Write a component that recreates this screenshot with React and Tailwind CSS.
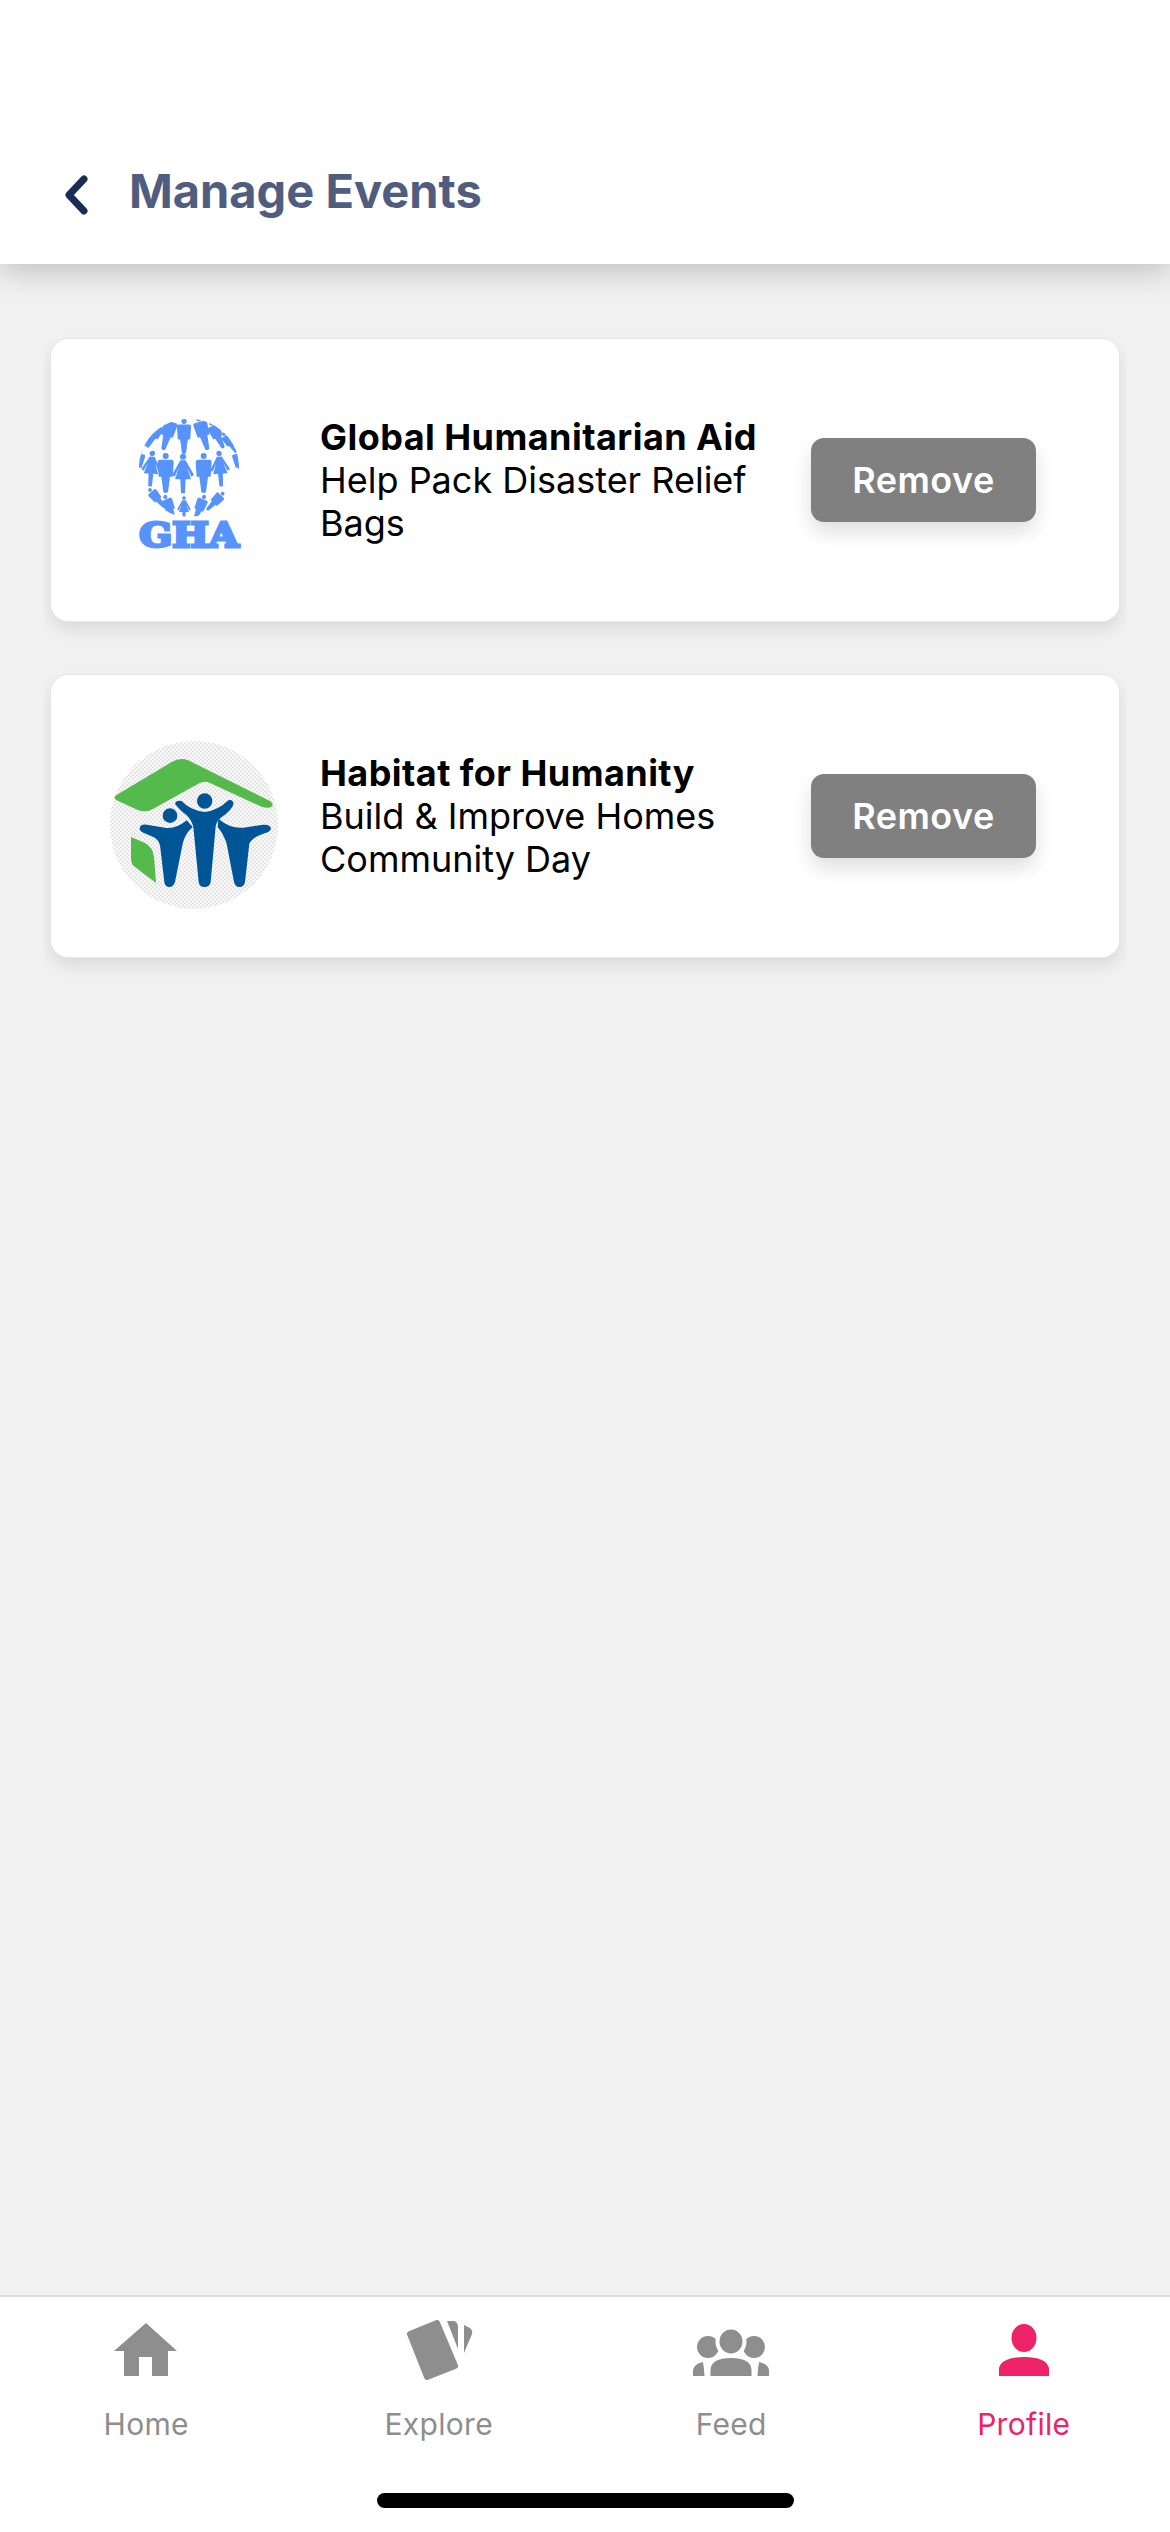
import React from "react";

const Man = ({ x, y, s = 1, r = 0 }) => (
  <g transform={`translate(${x} ${y}) rotate(${r}) scale(${s})`}>
    <circle cx="0" cy="0" r="9" />
    <path d="M-20 11Q-25 13-24 22L-21 62-13 62-7 108Q0 114 7 108L13 62 21 62 24 22Q25 13 20 11Z" />
  </g>
);

const Woman = ({ x, y, s = 1, r = 0 }) => (
  <g transform={`translate(${x} ${y}) rotate(${r}) scale(${s})`}>
    <circle cx="0" cy="0" r="9" />
    <path d="M-8 11L8 11 33 55 25 60 12 32 24 68 8 68 6 110-6 110-8 68-24 68-12 32-25 60-33 55Z" />
  </g>
);

// globe made of people, coordinates follow the 3x crop of the card
const GhaLogo = () => (
  <svg viewBox="210 231 504 504" className="w-[168px] h-[168px] shrink-0 mt-[17px]">
    <defs>
      <clipPath id="globe">
        <ellipse cx="447" cy="419" rx="150" ry="147" />
      </clipPath>
    </defs>
    <g fill="#5793FB" clipPath="url(#globe)">
      <Woman x={429} y={386} />
      <Man x={377} y={384} />
      <Man x={491} y={384} />
      <Woman x={337} y={376} s={0.9} r={4} />
      <Woman x={537} y={376} s={0.9} r={-4} />
      <Man x={300} y={368} s={0.8} r={14} />
      <Man x={592} y={368} s={0.8} r={-14} />
      <Man x={432} y={280} s={0.88} />
      <Man x={476} y={272} s={0.88} r={-16} />
      <Man x={396} y={272} s={0.88} r={16} />
      <Man x={514} y={286} s={0.75} r={-26} />
      <Man x={362} y={286} s={0.75} r={30} />
      <Man x={552} y={318} s={0.6} r={-34} />
      <Man x={326} y={318} s={0.6} r={36} />
      <Woman x={432} y={510} s={0.62} />
      <Man x={376} y={507} s={0.68} r={-22} />
      <Man x={492} y={507} s={0.68} r={22} />
      <Man x={548} y={497} s={0.62} r={44} />
      <Man x={330} y={486} s={0.62} r={-40} />
    </g>
    <text
      x="447"
      y="658"
      textAnchor="middle"
      textLength="298"
      lengthAdjust="spacingAndGlyphs"
      fill="#5793FB"
      stroke="#5793FB"
      strokeWidth="9"
      fontFamily="'DejaVu Serif', serif"
      fontWeight="700"
      fontSize="102"
    >
      GHA
    </text>
  </svg>
);

const HabitatLogo = () => (
  <svg viewBox="210 212 504 504" className="w-[168px] h-[168px] shrink-0 mt-[17px]">
    <defs>
      <pattern id="checks" width="12" height="12" patternUnits="userSpaceOnUse">
        <rect width="12" height="12" fill="#ffffff" />
        <rect width="6" height="6" fill="#e2e2e2" />
        <rect x="6" y="6" width="6" height="6" fill="#e2e2e2" />
      </pattern>
    </defs>
    <circle cx="462" cy="464" r="252" fill="url(#checks)" />
    <path
      fill="#53BA4B"
      d="M226 376L395 275Q420 260 445 270L690 392Q705 403 692 411Q675 416 655 405L510 338Q495 330 475 340L340 415Q320 427 295 420L235 392Q218 385 226 376Z"
    />
    <path fill="#53BA4B" d="M273 500L315 518Q338 530 342 560L348 638 285 590Q273 582 273 565Z" />
    <g fill="#005596">
      <circle cx="390" cy="436" r="22" />
      <circle cx="494" cy="392" r="23" />
      <path d="M300 470Q305 460 325 464L380 473Q410 475 440 450L458 470Q435 490 428 520L405 635Q400 650 388 650 375 650 373 635L360 525Q355 505 335 498L310 487Q295 480 300 470Z" />
      <path d="M405 400Q408 388 425 392 450 420 495 425 535 420 565 390 578 385 581 400 575 420 545 440 525 455 526 480L512 635Q510 650 493 650 478 650 476 635L460 470Q455 450 440 435 415 415 405 400Z" />
      <path d="M535 445Q570 475 610 472L670 463Q692 462 693 475 690 485 670 490 635 502 628 520L615 635Q612 650 598 650 586 650 582 635L560 520Q550 490 533 470Z" />
    </g>
  </svg>
);

const EventCard = ({ logo, title, lines }) => (
  <div className="overflow-hidden px-[6px] pt-[4px] pb-[30px]">
    <div className="flex items-center h-[284px] pl-[59px] pr-[64px] bg-white rounded-[18px] border border-[#e6e6e6] shadow-[0_8px_16px_rgba(0,0,0,0.09)]">
      {logo}
      <div className="flex-1 ml-[42px] text-[36px] leading-[43px] text-black">
        <div className="font-bold tracking-[0.45px]">{title}</div>
        {lines.map((line) => (
          <div key={line}>{line}</div>
        ))}
      </div>
      <div className="overflow-hidden mt-[17px] px-[19px] pt-[6px] pb-[23px]">
        <div className="flex items-center justify-center w-[225px] h-[84px] rounded-[13px] bg-[#808080] text-white text-[36px] font-semibold tracking-[0.5px] shadow-[0_10px_20px_rgba(0,0,0,0.13)]">
          Remove
        </div>
      </div>
    </div>
  </div>
);

const HomeIcon = () => <path d="M0 3L31 31H22V56H6V37H-7V56H-22V31H-32Z" />;

const ExploreIcon = () => (
  <>
    <path
      d="M-29 14L-2 3 16 46-12 57Z"
      stroke="#8E8E8E"
      strokeWidth="6"
      strokeLinejoin="round"
    />
    <path d="M8 1L15 1Q19 2 19 7L19 29Z" />
    <path d="M25 5L31 8Q34 11 33 14L25 33Z" />
  </>
);

const FeedIcon = () => (
  <>
    <circle cx="-23" cy="27" r="11" />
    <circle cx="23" cy="27" r="11" />
    <ellipse cx="0" cy="21.5" rx="13.5" ry="14" stroke="#ffffff" strokeWidth="4" />
    <path d="M-20.5 56V50Q-20 38 0 38 20 38 20.5 50V56Z" />
    <path d="M-38 56V50Q-37 44-28 42-27 48-26.5 56Z" />
    <path d="M38 56V50Q37 44 28 42 27 48 26.5 56Z" />
  </>
);

const ProfileIcon = () => (
  <>
    <ellipse cx="0" cy="18" rx="12.5" ry="14" />
    <path d="M-25 56V48Q-22 37 0 37 22 37 25 48V56Z" />
  </>
);

const tabs = [
  { label: "Home", icon: <HomeIcon /> },
  { label: "Explore", icon: <ExploreIcon /> },
  { label: "Feed", icon: <FeedIcon /> },
  { label: "Profile", icon: <ProfileIcon />, active: true },
];

const App = () => {
  return (
    <div className="flex flex-col w-[1170px] h-[2532px] bg-[#f1f1f1] font-['Inter',sans-serif] overflow-hidden">
      <header className="relative z-10 flex items-end h-[264px] pb-[44px] pl-[62px] bg-white shadow-[0_8px_28px_rgba(0,0,0,0.2)]">
        <svg viewBox="0 0 28 42" className="w-[28px] h-[42px] mb-[4px]">
          <path
            d="M22 5L7 21 22 37"
            fill="none"
            stroke="#182C55"
            strokeWidth="7"
            strokeLinecap="round"
            strokeLinejoin="round"
          />
        </svg>
        <h1 className="ml-[39px] text-[47px] leading-[58px] font-bold text-[#515D7E]">
          Manage Events
        </h1>
      </header>

      <main className="flex flex-col flex-1 gap-[18px] pt-[70px] px-[44px]">
        <EventCard
          logo={<GhaLogo />}
          title="Global Humanitarian Aid"
          lines={["Help Pack Disaster Relief", "Bags"]}
        />
        <EventCard
          logo={<HabitatLogo />}
          title="Habitat for Humanity"
          lines={["Build & Improve Homes", "Community Day"]}
        />
      </main>

      <nav className="relative z-10 bg-white border-t-2 border-[#dcdcdc] pt-[23px] pb-[24px]">
        <div className="grid grid-cols-4">
          {tabs.map((tab) => (
            <div
              key={tab.label}
              className={`flex flex-col items-center ${tab.active ? "text-[#EE2266]" : "text-[#8E8E8E]"}`}
            >
              <svg viewBox="-40 0 80 64" fill="currentColor" className="w-[80px] h-[64px]">
                {tab.icon}
              </svg>
              <span className="mt-[22px] text-[30px] leading-[36px] tracking-[0.3px]">{tab.label}</span>
            </div>
          ))}
        </div>
        <div className="w-[417px] h-[15px] mx-auto mt-[51px] rounded-full bg-black" />
      </nav>
    </div>
  );
};

export default App;
